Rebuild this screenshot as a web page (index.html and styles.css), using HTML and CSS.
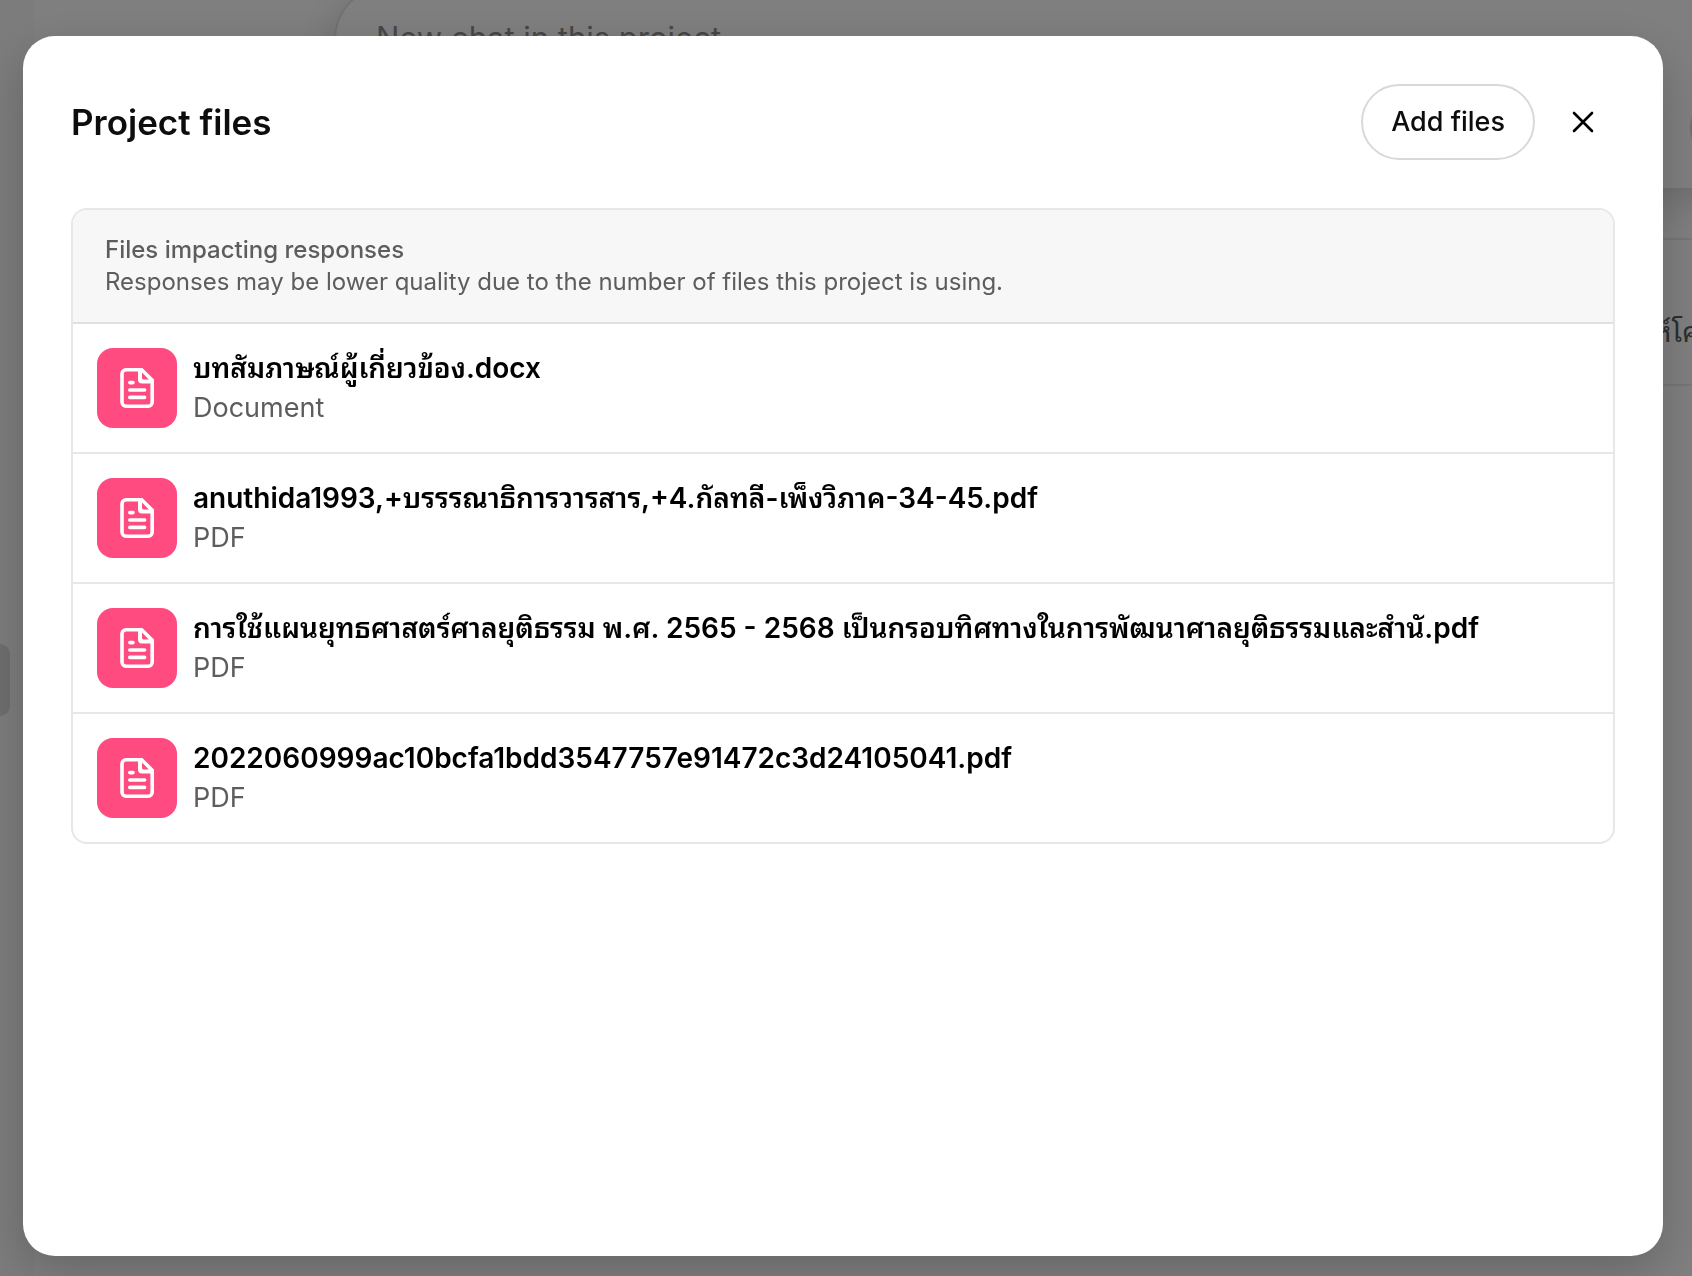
FILE: index.html
```
<!DOCTYPE html>
<html lang="en">
<head>
<meta charset="utf-8">
<meta name="viewport" content="width=device-width, initial-scale=1">
<title>Project files</title>
<link rel="stylesheet" href="styles.css">
</head>
<body>
<svg class="sprite" aria-hidden="true">
  <symbol id="icon-file" viewBox="0 0 40 40" fill="none" stroke="currentColor" stroke-linecap="round" stroke-linejoin="round">
    <path stroke-width="3.6" d="M21.5 1.8H9A4 4 0 0 0 5 5.8V34.2A4 4 0 0 0 9 38.2H31.2A4 4 0 0 0 35.2 34.2V15.2"/>
    <path fill="currentColor" stroke="none" fill-rule="evenodd" d="M21 0H25.4L37 11.6V15.4H25A4 4 0 0 1 21 11.4ZM25 4.6V9.8A1.6 1.6 0 0 0 26.6 11.4H31.8Z"/>
    <path stroke-width="3.6" d="M12.8 14.6H16M12.8 22H27.6M12.8 29.4H27.6"/>
  </symbol>
</svg>

<div class="app" aria-hidden="true">
  <div class="sidebar"><span class="handle"></span></div>
  <div class="main">
    <div class="composer">
      <span class="composer-placeholder">New chat in this project</span>
      <span class="composer-action"></span>
    </div>
    <div class="chat-row">ห์โค</div>
  </div>
</div>

<div class="overlay">
  <section class="modal" role="dialog" aria-modal="true" aria-labelledby="dialog-title">
    <header class="modal-header">
      <h2 class="modal-title" id="dialog-title">Project files</h2>
      <div class="modal-actions">
        <button class="add-button" type="button">Add files</button>
        <button class="close-button" type="button" aria-label="Close">
          <svg width="22" height="22" viewBox="0 0 22 22" fill="none" stroke="currentColor" stroke-width="2.6" stroke-linecap="round"><path d="M2 2L20 20M20 2L2 20"/></svg>
        </button>
      </div>
    </header>
    <div class="files">
      <div class="notice">
        <p class="notice-title">Files impacting responses</p>
        <p class="notice-text">Responses may be lower quality due to the number of files this project is using.</p>
      </div>
      <ul class="file-list">
        <li class="file">
          <span class="file-icon"><svg width="40" height="40"><use href="#icon-file"/></svg></span>
          <div class="file-info"><p class="file-name">บทสัมภาษณ์ผู้เกี่ยวข้อง.docx</p><p class="file-type">Document</p></div>
        </li>
        <li class="file">
          <span class="file-icon"><svg width="40" height="40"><use href="#icon-file"/></svg></span>
          <div class="file-info"><p class="file-name">anuthida1993,+บรรรณาธิการวารสาร,+4.กัลทลี-เพ็งวิภาค-34-45.pdf</p><p class="file-type">PDF</p></div>
        </li>
        <li class="file">
          <span class="file-icon"><svg width="40" height="40"><use href="#icon-file"/></svg></span>
          <div class="file-info"><p class="file-name">การใช้แผนยุทธศาสตร์ศาลยุติธรรม พ.ศ. 2565 - 2568 เป็นกรอบทิศทางในการพัฒนาศาลยุติธรรมและสำนั.pdf</p><p class="file-type">PDF</p></div>
        </li>
        <li class="file">
          <span class="file-icon"><svg width="40" height="40"><use href="#icon-file"/></svg></span>
          <div class="file-info"><p class="file-name">2022060999ac10bcfa1bdd3547757e91472c3d24105041.pdf</p><p class="file-type">PDF</p></div>
        </li>
      </ul>
    </div>
  </section>
</div>
</body>
</html>
```
FILE: styles.css
```
* {
  box-sizing: border-box;
}

body {
  margin: 0;
  overflow: hidden;
  color: #0d0d0d;
  font-family: Inter, "Noto Sans Thai Looped", "Noto Sans Thai", "Noto Sans", sans-serif;
  font-size: 28px;
  line-height: 40px;
}

h2, p, ul {
  margin: 0;
  padding: 0;
}

.sprite {
  position: absolute;
  width: 0;
  height: 0;
}

/* Page behind the dialog */
.app {
  display: flex;
  height: 100vh;
  overflow: hidden;
  background: #fff;
}

.sidebar {
  display: flex;
  flex: none;
  align-items: center;
  width: 34px;
  padding-top: 84px;
  background: #f9f9f9;
}

.handle {
  width: 10px;
  height: 72px;
  border-radius: 0 12px 12px 0;
  background: #dcdcdc;
}

.main {
  flex: 1;
  min-width: 0;
}

.composer {
  display: flex;
  justify-content: space-between;
  height: 206px;
  margin: -16px -50px 0 300px;
  padding: 32px 0 24px 40px;
  border: 2px solid #e3e3e3;
  border-radius: 56px;
  box-shadow: 0 8px 40px rgba(0, 0, 0, 0.16);
}

.composer-placeholder {
  color: #8f8f8f;
  font-size: 31px;
}

.composer-action {
  align-self: flex-end;
  width: 50px;
  height: 72px;
  border: 2px solid #dcdcdc;
  border-radius: 36px 0 0 36px;
}

.chat-row {
  height: 148px;
  margin: 48px -8px 0 0;
  padding-top: 72px;
  border: solid #ececec;
  border-width: 2px 0;
  color: #5d5d5d;
  text-align: right;
}

/* Dialog */
.overlay {
  position: fixed;
  inset: 0;
  display: flex;
  padding: 36px 29px 20px 23px;
  background: rgba(0, 0, 0, 0.5);
}

.modal {
  flex: 1;
  min-width: 0;
  padding: 48px;
  overflow: auto;
  border-radius: 32px;
  background: #fff;
  box-shadow: 0 16px 48px rgba(0, 0, 0, 0.2);
}

.modal-header {
  display: flex;
  align-items: center;
  justify-content: space-between;
  margin-bottom: 48px;
}

.modal-title {
  font-size: 35px;
  font-weight: 600;
  line-height: 48px;
}

.modal-actions {
  display: flex;
  align-items: center;
  gap: 16px;
}

.add-button {
  height: 76px;
  padding: 0 28px;
  border: 2px solid #d9d9d9;
  border-radius: 38px;
  background: #fff;
  color: #0d0d0d;
  font: inherit;
  font-size: 27px;
  font-weight: 500;
}

.close-button {
  display: grid;
  place-items: center;
  width: 64px;
  height: 64px;
  padding: 0;
  border: 0;
  border-radius: 12px;
  background: none;
  color: #000;
}

.files {
  overflow: hidden;
  border: 2px solid #e7e7e7;
  border-radius: 16px;
}

.notice {
  padding: 24px 32px;
  border-bottom: 2px solid #e0e0e0;
  background: #f7f7f7;
  color: #5d5d5d;
  font-size: 24px;
  line-height: 32px;
}

.notice-title {
  font-weight: 500;
}

.file-list {
  list-style: none;
}

.file {
  display: flex;
  align-items: center;
  gap: 16px;
  padding: 24px;
}

.file + .file {
  border-top: 2px solid #e7e7e7;
}

.file-icon {
  display: grid;
  flex: none;
  place-items: center;
  width: 80px;
  height: 80px;
  border-radius: 16px;
  background: #ff4b7f;
  color: #fff;
}

.file-info {
  min-width: 0;
}

.file-name {
  overflow: hidden;
  color: #000;
  font-weight: 600;
  text-overflow: ellipsis;
  white-space: nowrap;
}

.file-type {
  color: #5d5d5d;
  font-size: 27px;
}
```
